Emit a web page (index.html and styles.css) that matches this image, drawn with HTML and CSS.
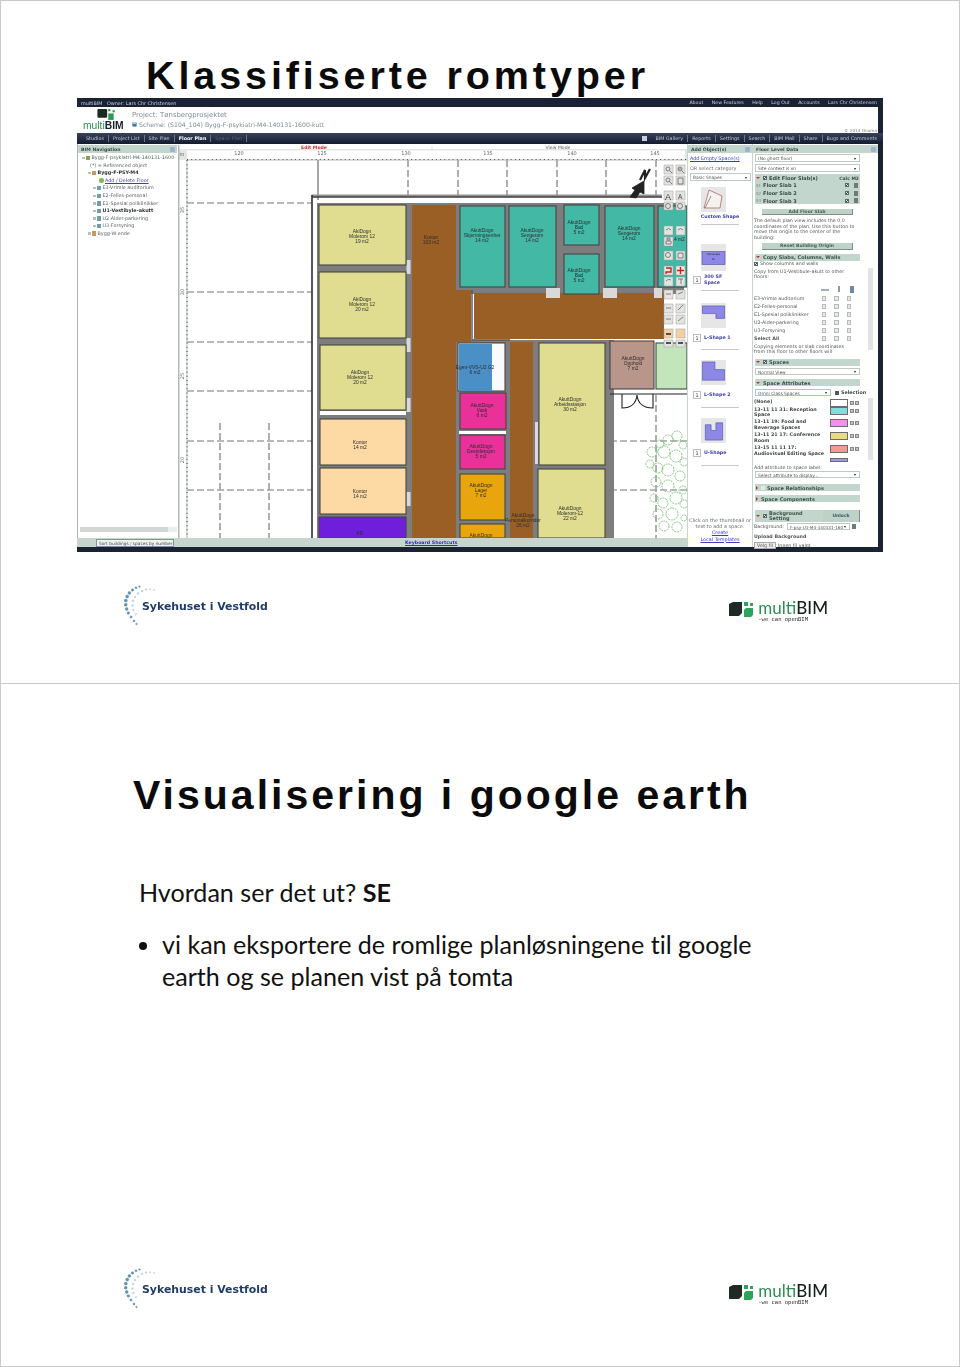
FILE: index.html
```html
<!DOCTYPE html>
<html lang="no">
<head>
<meta charset="utf-8">
<title>Klassifiserte romtyper</title>
<link rel="stylesheet" href="styles.css">
</head>
<body>
<section class="slide">
  <h1 class="title title-one">Klassifiserte romtyper</h1>
  <div class="app">
    <div class="titlebar">
      <span class="owner">multiBIM&nbsp;&nbsp; Owner: Lars Chr Christensen</span>
      <span class="toplinks"><span>About</span><span>New Features</span><span>Help</span><span>Log Out</span><span>Accounts</span><span>Lars Chr Christensen</span></span>
    </div>
    <div class="brand">
      <div class="applogo">
        <svg class="applogo-mark" viewBox="0 0 20 12"><rect x="3" y="1" width="9" height="8" rx="1" fill="#1d2a24"/><rect x="13" y="1" width="2" height="2" fill="#2c8f50"/><rect x="17" y="2" width="2" height="2" fill="#2c8f50"/><rect x="13" y="5" width="5" height="6" fill="#2c9b55"/></svg>
        <div class="applogo-word"><span class="green">multi</span><b>BIM</b></div>
      </div>
      <div class="project">
        <div class="project-name">Project: Tønsbergprosjektet</div>
        <div class="scheme"><svg class="scheme-ico" viewBox="0 0 6 6"><rect x="0.5" y="0.5" width="5" height="5" fill="#3a6fb0"/><rect x="1.5" y="0.5" width="3" height="2" fill="#cfe0f2"/></svg>Scheme: (S104_104) Bygg-F-psykiatri-M4-140131-1600-kutt</div>
      </div>
      <div class="copyright">© 2014 Onuma</div>
    </div>
    <div class="nav">
      <span class="navitem">Studios</span><span class="navitem">Project List</span><span class="navitem">Site Plan</span><span class="navitem on">Floor Plan</span><span class="navitem off">Space Plan</span>
      <span class="navright"><span class="navbox"></span><span class="navitem">BIM Gallery</span><span class="navitem">Reports</span><span class="navitem">Settings</span><span class="navitem">Search</span><span class="navitem">BIM Mail</span><span class="navitem">Share</span><span class="navitem">Bugs and Comments</span></span>
    </div>
    <div class="main">
      <div class="centre">
        <div class="work">
          <aside class="tree">
            <div class="phead"><b>BIM Navigation</b><i class="collapse"></i></div>
            <ul class="treelist">
              <li class="lv0"><i class="tk"></i><i class="ic bld"></i>Bygg-F-psykiatri-M4-140131-1600-</li>
              <li class="lv1">(*) = Referenced object</li>
              <li class="lv2"><i class="tk"></i><i class="ic org"></i><b>Bygg-F-PSY-M4</b></li>
              <li class="lv3"><i class="ic add"></i><span class="link">Add / Delete Floor</span></li>
              <li class="lv3b"><i class="tk"></i><i class="ic flr"></i>E3-Vrimle auditorium</li>
              <li class="lv3b"><i class="tk"></i><i class="ic flr"></i>E2-Felles-personal</li>
              <li class="lv3b"><i class="tk"></i><i class="ic flr"></i>E1-Spesial poliklinikker</li>
              <li class="lv3b"><i class="tk"></i><i class="ic flr"></i><b>U1-Vestibyle-akutt</b></li>
              <li class="lv3b"><i class="tk"></i><i class="ic flr"></i>U2-Alder-parkering</li>
              <li class="lv3b"><i class="tk"></i><i class="ic flr"></i>U3-Forsyning</li>
              <li class="lv2"><i class="tk"></i><i class="ic org"></i>Bygg-W-ende</li>
            </ul>
            <div class="hscroll"><span></span></div>
          </aside>
          <div class="plan">
            <svg class="plan-svg" viewBox="178 145 509 393">
              <rect x="178" y="145" width="509" height="393" fill="#fff"/>
              <rect x="178" y="149" width="509" height="11" fill="#e4e6e4"/>
              <rect x="187" y="150.500" width="498" height="9.500" fill="#fff"/>
              <rect x="178" y="145" width="1.500" height="393" fill="#a9bdb5"/>
              <path class="sep" d="M432 146V150"/>
              <text class="mode red" x="314" y="148.500">Edit Mode</text>
              <text class="mode" x="558" y="148.500">View Mode</text>
              <path class="rulerline" d="M187 160H687M187 160V538"/>
              <path class="rulerticks" d="M187 159.500H687"/>
              <path class="rulerticks-v" d="M187 160V538"/>
              <text class="rl" x="182" y="155.500" text-anchor="middle">m</text>
              <g class="rl" text-anchor="middle">
                <text x="239" y="155">120</text><text x="322" y="155">125</text><text x="406" y="155">130</text><text x="488" y="155">135</text><text x="572" y="155">140</text><text x="655" y="155">145</text>
                <text transform="translate(184 210) rotate(-90)">35</text><text transform="translate(184 292) rotate(-90)">30</text><text transform="translate(184 376) rotate(-90)">25</text><text transform="translate(184 460) rotate(-90)">20</text>
              </g>
              <g class="grid">
                <path d="M187 203H312M187 292H312M187 342H312M187 391H312M187 441H312M187 490H312"/>
                <path d="M220 423V538M269 423V538"/>
                <path d="M408 160V195M458 160V195M507 160V195M557 160V195M606 160V195M656 160V195"/>
                <path d="M610 441H687M610 490H687M656 395V538"/>
              </g>
              <path class="solidgrid" d="M318 160V200"/>
              <g class="tree-art">
                <circle cx="677" cy="436" r="5"/><circle cx="668" cy="440" r="5"/><circle cx="660" cy="444" r="4"/><circle cx="683" cy="445" r="4"/><circle cx="652" cy="452" r="5"/><circle cx="664" cy="452" r="6"/><circle cx="676" cy="456" r="6"/><circle cx="684" cy="462" r="4"/><circle cx="650" cy="464" r="4"/><circle cx="658" cy="468" r="5"/><circle cx="668" cy="470" r="6"/><circle cx="680" cy="476" r="5"/><circle cx="656" cy="482" r="5"/><circle cx="668" cy="486" r="6"/><circle cx="683" cy="490" r="4"/><circle cx="654" cy="498" r="4"/><circle cx="676" cy="498" r="6"/><circle cx="663" cy="503" r="5"/><circle cx="684" cy="504" r="4"/><circle cx="658" cy="514" r="5"/><circle cx="672" cy="514" r="6"/><circle cx="684" cy="518" r="3"/><circle cx="664" cy="526" r="5"/><circle cx="677" cy="527" r="5"/>
              </g>

              <path class="topband" d="M312 195.500H662"/>
              <path class="outer" d="M312 197H662M312 195V538"/>
              <rect class="wallg" x="317" y="203" width="139" height="335"/>
              <rect class="wallg" x="456" y="203" width="228" height="91"/>
              <rect class="wallg" x="456" y="340" width="158" height="198"/>
              <rect class="wallw" x="406.500" y="260" width="4" height="14"/>
              <rect class="wallw" x="406.500" y="338" width="4" height="14"/>
              <rect class="wallw" x="406.500" y="398" width="4" height="14"/>
              <rect class="wallw" x="406.500" y="492" width="4" height="14"/>
              <rect class="wallw" x="535" y="422" width="3" height="42"/>

              <rect class="room brown" x="412" y="205" width="44" height="333"/>
              <rect class="room brown" x="412" y="290" width="59" height="52"/>
              <rect class="room brown" x="474" y="293" width="190" height="46"/>
              <rect class="room brown" x="510" y="342" width="23" height="196"/>
              <path class="thinwall" d="M472 290V340H510"/>

              <rect class="room yellow" x="319" y="205" width="87" height="60"/>
              <rect class="room yellow" x="319" y="272" width="87" height="66"/>
              <rect class="room yellow" x="320" y="345" width="86" height="65"/>
              <rect class="plainwhite" x="320" y="411" width="86" height="4"/>
              <rect class="room peach" x="320" y="419" width="86" height="46"/>
              <rect class="room peach" x="320" y="468" width="86" height="46"/>
              <rect class="room violet" x="319" y="517" width="87" height="21"/>

              <rect class="room teal" x="460" y="206" width="45" height="81"/>
              <rect class="room teal" x="509" y="206" width="47" height="81"/>
              <rect class="room teal" x="564" y="205" width="35" height="40"/>
              <rect class="room teal" x="564" y="254" width="35" height="40"/>
              <rect class="room teal" x="605" y="206" width="49" height="81"/>
              <rect class="room teal" x="658" y="206" width="29" height="81"/>
              <rect class="wallw" x="546" y="288" width="14" height="10"/>
              <rect class="wallw" x="603" y="288" width="14" height="10"/>
              <rect class="wallw" x="654" y="288" width="8" height="10"/>

              <rect class="room white" x="458" y="343" width="47" height="48"/>
              <rect class="room-f blue" x="459" y="344" width="33" height="47"/>
              <rect class="room magenta" x="460" y="393" width="46" height="36"/>
              <rect class="plainwhite" x="459" y="431" width="47" height="3"/>
              <rect class="room magenta" x="460" y="435" width="45" height="34"/>
              <rect class="room amber" x="460" y="474" width="45" height="46"/>
              <rect class="room amber" x="460" y="524" width="45" height="14"/>
              <rect class="room yellow" x="539" y="343" width="66" height="122"/>
              <rect class="room yellow" x="538" y="469" width="67" height="69"/>
              <rect class="room rose" x="610" y="341" width="44" height="48"/>
              <rect class="room mint" x="656" y="343" width="31" height="46"/>

              <g class="door">
                <path d="M610 394H687M622 394V408C630 408 636 405 637 395C638 405 644 408 653 408V394"/>
              </g>

              <g class="rt">
                <text y="233"><tspan x="362">AkiDogn</tspan><tspan x="362" dy="5.200">Molerom 12</tspan><tspan x="362" dy="5.200">19 m2</tspan></text>
                <text y="301"><tspan x="362">AkiDogn</tspan><tspan x="362" dy="5.200">Molerom 12</tspan><tspan x="362" dy="5.200">20 m2</tspan></text>
                <text y="374"><tspan x="360">AkiDogn</tspan><tspan x="360" dy="5.200">Molerom 12</tspan><tspan x="360" dy="5.200">20 m2</tspan></text>
                <text y="444"><tspan x="360">Kontor</tspan><tspan x="360" dy="5.200">14 m2</tspan></text>
                <text y="493"><tspan x="360">Kontor</tspan><tspan x="360" dy="5.200">14 m2</tspan></text>
                <text x="360" y="535">KR</text>
                <text y="239"><tspan x="431">Kontor</tspan><tspan x="431" dy="5.200">103 m2</tspan></text>
                <text y="232"><tspan x="482">AkuttDogn</tspan><tspan x="482" dy="5.200">Skjermingsenhet</tspan><tspan x="482" dy="5.200">14 m2</tspan></text>
                <text y="232"><tspan x="532">AkuttDogn</tspan><tspan x="532" dy="5.200">Sengerom</tspan><tspan x="532" dy="5.200">14 m2</tspan></text>
                <text y="224"><tspan x="579">AkuttDogn</tspan><tspan x="579" dy="5.200">Bad</tspan><tspan x="579" dy="5.200">5 m2</tspan></text>
                <text y="272"><tspan x="579">AkuttDogn</tspan><tspan x="579" dy="5.200">Bad</tspan><tspan x="579" dy="5.200">5 m2</tspan></text>
                <text y="230"><tspan x="629">AkuttDogn</tspan><tspan x="629" dy="5.200">Sengerom</tspan><tspan x="629" dy="5.200">14 m2</tspan></text>
                <text x="678" y="241">14 m2</text>
                <text y="369"><tspan x="475">Egen-VVS-U2 G2</tspan><tspan x="475" dy="5.200">6 m2</tspan></text>
                <text y="407"><tspan x="482">AkuttDogn</tspan><tspan x="482" dy="5.200">Vask</tspan><tspan x="482" dy="5.200">6 m2</tspan></text>
                <text y="448"><tspan x="481">AkuttDogn</tspan><tspan x="481" dy="5.200">Desinfeksjon</tspan><tspan x="481" dy="5.200">5 m2</tspan></text>
                <text y="487"><tspan x="481">AkuttDogn</tspan><tspan x="481" dy="5.200">Lager</tspan><tspan x="481" dy="5.200">7 m2</tspan></text>
                <text x="481" y="537">AkuttDogn</text>
                <text y="517"><tspan x="523">AkuttDogn</tspan><tspan x="523" dy="5.200">Personalkorridor</tspan><tspan x="523" dy="5.200">26 m2</tspan></text>
                <text y="401"><tspan x="570">AkuttDogn</tspan><tspan x="570" dy="5.200">Arbeidsstasjon</tspan><tspan x="570" dy="5.200">30 m2</tspan></text>
                <text y="510"><tspan x="570">AkuttDogn</tspan><tspan x="570" dy="5.200">Molerom-12</tspan><tspan x="570" dy="5.200">22 m2</tspan></text>
                <text y="360"><tspan x="633">AkuttDogn</tspan><tspan x="633" dy="5.200">Opphold</tspan><tspan x="633" dy="5.200">7 m2</tspan></text>
              </g>

              <path class="north" d="M630 197L635 190L632 188L644 181L644 194L640 192L636 198Z"/>
              <path class="north-n" d="M640 180L645 170L645 178L650 169"/>

              <g class="tools">
                <rect x="664" y="165" width="9" height="9"/><rect x="676" y="165" width="9" height="9"/>
                <rect x="664" y="176" width="9" height="9"/><rect x="676" y="176" width="9" height="9"/>
                <rect x="664" y="191" width="9" height="9"/><rect x="676" y="191" width="9" height="9"/>
                <rect x="664" y="202" width="9" height="8"/><rect x="676" y="202" width="9" height="8"/>
                <rect x="664" y="226" width="9" height="9"/><rect x="676" y="226" width="9" height="9"/>
                <rect x="664" y="237" width="9" height="9"/>
                <rect x="664" y="251" width="9" height="9"/><rect x="676" y="251" width="9" height="9"/>
                <rect class="redt" x="664" y="266" width="9" height="9"/><rect class="redt" x="676" y="266" width="9" height="9"/>
                <rect x="664" y="277" width="9" height="9"/><rect x="676" y="277" width="9" height="9"/>
                <rect x="664" y="290" width="9" height="9"/><rect x="676" y="290" width="9" height="9"/>
                <rect x="664" y="304" width="9" height="9"/><rect x="676" y="304" width="9" height="9"/>
                <rect x="664" y="315" width="9" height="9"/><rect x="676" y="315" width="9" height="9"/>
                <rect class="peacht" x="664" y="329" width="9" height="9"/><rect class="peacht" x="676" y="329" width="9" height="9"/>
                <rect x="664" y="340" width="9" height="7"/><rect x="676" y="340" width="9" height="7"/>
              </g>
              <g class="toolg">
                <circle cx="668" cy="169" r="2"/><path d="M669.500 170.500l2.500 2.500"/><circle cx="680" cy="169" r="2"/><path d="M681.500 170.500l2.500 2.500M678.500 169h3"/>
                <circle cx="668" cy="180" r="2"/><path d="M669.500 181.500l2.500 2.500"/><path d="M678 184h5V178h-5z"/>
                <circle cx="668" cy="206" r="2.500"/><circle cx="680" cy="206" r="2.500"/>
                <path d="M666 230q2.500 -3 5 0M678 230q2.500 -3 5 0M666 241h5v3h-5zM667 238h3v2h-3z"/>
                <circle cx="668" cy="255" r="2.500"/><path d="M678 258h5v-5h-5z"/>
                <path d="M666 281q2 -3 5 -1M678 279h5M681 279v5"/>
                <path d="M666 294h5M678 294l5 -2M666 308h5M678 310l5 -5M666 319h5M678 321l5 -4"/>
                <path class="darkg" d="M666 334h5M666 343h5M678 343h5"/>
                <path class="redg" d="M666 268h5v4h-5v2M680.500 267v7M677 270.500h7"/>
              </g>
              <text class="tooltext" x="665" y="199.500">A</text><text class="tooltextsm" x="678" y="199">A</text>
            </svg>
          </div>
        </div>
        <div class="foot">
          <span class="sort">Sort buildings / spaces by number</span>
          <span class="kbd">Keyboard Shortcuts</span>
        </div>
      </div>
      <aside class="objs">
        <div class="phead"><b>Add Object(s)</b><i class="collapse"></i></div>
        <div class="linkrow"><span class="link">Add Empty Space(s)</span></div>
        <div class="orrow">OR select category</div>
        <div class="sel sel-obj">Basic Shapes</div>
        <div class="thumb thumb-custom">
          <svg viewBox="0 0 25 25"><path d="M8 3L21 9L19 21L3 21Z" fill="#f4f1ee" stroke="#a85a50" stroke-width=".7"/><path d="M4 21L10 9" stroke="#333" stroke-width=".5"/></svg>
        </div>
        <div class="shape-name center">Custom Shape</div>
        <div class="divide"></div>
        <div class="thumb thumb-a">
          <svg viewBox="0 0 25 26"><rect x="1" y="7" width="23" height="13" fill="#8d88e6" stroke="#4a4ab0" stroke-width=".6"/><text x="12.500" y="10" class="mini">Rectangle</text><text x="12.500" y="15" class="mini">SF</text></svg>
        </div>
        <div class="shape-row sr-a"><span class="qty">1</span><span class="shape-name">300 SF<br>Space</span></div>
        <div class="divide dv-a"></div>
        <div class="thumb thumb-b">
          <svg viewBox="0 0 25 26"><path d="M1 3H24V16H15V11H1Z" fill="#8d88e6" stroke="#4a4ab0" stroke-width=".6"/></svg>
        </div>
        <div class="shape-row sr-b"><span class="qty">1</span><span class="shape-name">L-Shape 1</span></div>
        <div class="divide dv-b"></div>
        <div class="thumb thumb-c">
          <svg viewBox="0 0 25 26"><path d="M1 2H14V10H24V21H1Z" fill="#8d88e6" stroke="#4a4ab0" stroke-width=".6"/></svg>
        </div>
        <div class="shape-row sr-c"><span class="qty">1</span><span class="shape-name">L-Shape 2</span></div>
        <div class="divide dv-c"></div>
        <div class="thumb thumb-d">
          <svg viewBox="0 0 25 26"><path d="M4 7H10V13H15V5H22V23H4Z" fill="#8d88e6" stroke="#4a4ab0" stroke-width=".6"/></svg>
        </div>
        <div class="shape-row sr-d"><span class="qty">1</span><span class="shape-name">U-Shape</span></div>
        <div class="divide dv-d"></div>
        <div class="hint">Click on the thumbnail or<br>text to add a space.<br><span class="link lk-hint">Create<br>Local Templates</span></div>
      </aside>
      <aside class="floor">
        <div class="phead"><b>Floor Level Data</b><i class="collapse"></i></div>
        <div class="sel s1">(No ghost floor)</div>
        <div class="sel s2">Site context is on</div>
        <div class="slabs">
          <div class="slab-head"><i class="tri"></i><i class="chk"></i><b>Edit Floor Slab(s)</b><b class="calc">Calc M2</b></div>
          <div class="slab"><span class="sn">S1</span><b>Floor Slab 1</b><i class="chk end"></i><i class="bin"></i></div>
          <div class="slab"><span class="sn">S2</span><b>Floor Slab 2</b><i class="chk end"></i><i class="bin"></i></div>
          <div class="slab"><span class="sn">S3</span><b>Floor Slab 3</b><i class="chk end"></i><i class="bin"></i></div>
        </div>
        <div class="btn b1">Add Floor Slab</div>
        <p class="para p1">The default plan view includes the 0,0<br>coordinates of the plan. Use this button to<br>move this origin to the center of the<br>building:</p>
        <div class="btn b2">Reset Building Origin</div>
        <div class="bar b-copy"><i class="tri"></i><b>Copy Slabs, Columns, Walls</b></div>
        <div class="line l-show"><i class="chk"></i>Show columns and walls</div>
        <p class="para p2">Copy from U1-Vestibule-akutt to other<br>floors:</p>
        <div class="copyicons"><svg viewBox="0 0 36 9"><path d="M0 5H8" stroke="#5a7a9a" stroke-width="1.200"/><path d="M18 1V7" stroke="#333" stroke-width="1"/><rect x="29" y="1" width="4" height="7" fill="#6a8aa8"/></svg></div>
        <div class="copylist">
          <div class="cl">E3-Vrimle auditorium<i class="cb"></i><i class="cb"></i><i class="cb"></i></div>
          <div class="cl">E2-Felles-personal<i class="cb"></i><i class="cb"></i><i class="cb"></i></div>
          <div class="cl">E1-Spesial poliklinikker<i class="cb"></i><i class="cb"></i><i class="cb"></i></div>
          <div class="cl">U2-Alder-parkering<i class="cb"></i><i class="cb"></i><i class="cb"></i></div>
          <div class="cl">U3-Forsyning<i class="cb"></i><i class="cb"></i><i class="cb"></i></div>
          <div class="cl"><b>Select All</b><i class="cb"></i><i class="cb"></i><i class="cb"></i></div>
        </div>
        <p class="para p3">Copying elements or slab coordinates<br>from this floor to other floors will</p>
        <div class="bar b-spaces"><i class="tri"></i><i class="chk"></i><b>Spaces</b></div>
        <div class="sel s3">Normal View</div>
        <div class="bar b-attr"><i class="tri"></i><b>Space Attributes</b></div>
        <div class="selrow"><div class="sel s4">Omni Class Spaces</div><i class="pop"></i><b>Selection</b></div>
        <div class="legend">
          <div class="lg lg1"><b>(None)</b><i class="sw w0"></i><i class="mb"></i><i class="mb"></i></div>
          <div class="lg lg2"><b>13-11 11 31: Reception<br>Space</b><i class="sw w1"></i><i class="mb"></i><i class="mb"></i></div>
          <div class="lg lg2"><b>13-11 19: Food and<br>Beverage Spaces</b><i class="sw w2"></i><i class="mb"></i><i class="mb"></i></div>
          <div class="lg lg2"><b>13-11 21 17: Conference<br>Room</b><i class="sw w3"></i><i class="mb"></i><i class="mb"></i></div>
          <div class="lg lg2"><b>13-15 11 11 17:<br>Audiovisual Editing Space</b><i class="sw w4"></i><i class="mb"></i><i class="mb"></i></div>
          <div class="lg lg3"><i class="sw w5"></i></div>
        </div>
        <div class="line l-add">Add attribute to space label:</div>
        <div class="sel s5">Select attribute to display...</div>
        <div class="bar b-rel"><i class="tri red"></i><i class="cbw"></i><b>Space Relationships</b></div>
        <div class="bar b-comp"><i class="tri red"></i><b>Space Components</b></div>
        <div class="bgrow"><div class="bgbar"><i class="tri"></i><i class="chk"></i><b>Background<br>Setting</b></div><div class="unlock">Unlock</div></div>
        <div class="bgsel">Background:<span class="sel s6">F-psy-U1-M4-140131-160</span><i class="bin"></i></div>
        <div class="line l-up"><b>Upload Background</b></div>
        <div class="line l-file"><span class="filebtn">Velg fil</span>Ingen fil valgt</div>
        <div class="vscroll v1"></div>
        <div class="vscroll v2"></div>
      </aside>
    </div>
    <div class="base"></div>
  </div>
  <footer class="logos">
    <div class="shv">
      <svg class="shv-mark" viewBox="0 0 34 45">
        <g class="dots-a">
          <circle cx="15.500" cy="1.500" r=".8"/><circle cx="12" cy="2.800" r="1"/><circle cx="8.500" cy="5" r="1.200"/><circle cx="5.400" cy="8" r="1.400"/><circle cx="3.200" cy="11.500" r="1.500"/><circle cx="1.800" cy="15.500" r="1.500"/><circle cx="1.700" cy="19.700" r="1.500"/><circle cx="2.700" cy="24" r="1.400"/><circle cx="4.300" cy="28" r="1.300"/><circle cx="7" cy="32" r="1.100"/><circle cx="10" cy="36" r="1"/><circle cx="12.500" cy="39" r=".8"/>
        </g>
        <g class="dots-b">
          <circle cx="30" cy="5" r=".7"/><circle cx="26" cy="4.300" r=".8"/><circle cx="22" cy="4.500" r=".9"/><circle cx="18" cy="6" r="1"/><circle cx="14" cy="8.500" r="1"/><circle cx="11" cy="12" r="1"/><circle cx="9" cy="16" r="1"/><circle cx="8.500" cy="20.500" r="1"/><circle cx="9.500" cy="25" r=".9"/><circle cx="12" cy="29" r=".8"/>
        </g>
      </svg>
      <span class="shv-text">Sykehuset i Vestfold</span>
    </div>
    <div class="mbim">
      <svg class="mbim-mark" viewBox="0 0 26 16"><path d="M0 3L4 1H13V12L10 15H0Z" fill="#1f2a24"/><rect x="15" y="1" width="4" height="4" fill="#2ea35c"/><rect x="21" y="2" width="3" height="3" fill="#2ea35c"/><path d="M15 9L17 7H24V14L22 16H15Z" fill="#2ea35c"/></svg>
      <div class="mbim-text"><div class="mbim-word"><span class="green">multi</span><b>BIM</b></div><div class="mbim-sub">-we can openBIM</div></div>
    </div>
  </footer>
</section>
<section class="slide">
  <h1 class="title title-two">Visualisering i google earth</h1>
  <div class="body">
    <p class="lead">Hvordan ser det ut? <b>SE</b></p>
    <ul class="bullets">
      <li>vi kan eksportere de romlige planløsningene til google earth og se planen vist på tomta</li>
    </ul>
  </div>
  <footer class="logos">
    <div class="shv">
      <svg class="shv-mark" viewBox="0 0 34 45">
        <g class="dots-a">
          <circle cx="15.500" cy="1.500" r=".8"/><circle cx="12" cy="2.800" r="1"/><circle cx="8.500" cy="5" r="1.200"/><circle cx="5.400" cy="8" r="1.400"/><circle cx="3.200" cy="11.500" r="1.500"/><circle cx="1.800" cy="15.500" r="1.500"/><circle cx="1.700" cy="19.700" r="1.500"/><circle cx="2.700" cy="24" r="1.400"/><circle cx="4.300" cy="28" r="1.300"/><circle cx="7" cy="32" r="1.100"/><circle cx="10" cy="36" r="1"/><circle cx="12.500" cy="39" r=".8"/>
        </g>
        <g class="dots-b">
          <circle cx="30" cy="5" r=".7"/><circle cx="26" cy="4.300" r=".8"/><circle cx="22" cy="4.500" r=".9"/><circle cx="18" cy="6" r="1"/><circle cx="14" cy="8.500" r="1"/><circle cx="11" cy="12" r="1"/><circle cx="9" cy="16" r="1"/><circle cx="8.500" cy="20.500" r="1"/><circle cx="9.500" cy="25" r=".9"/><circle cx="12" cy="29" r=".8"/>
        </g>
      </svg>
      <span class="shv-text">Sykehuset i Vestfold</span>
    </div>
    <div class="mbim">
      <svg class="mbim-mark" viewBox="0 0 26 16"><path d="M0 3L4 1H13V12L10 15H0Z" fill="#1f2a24"/><rect x="15" y="1" width="4" height="4" fill="#2ea35c"/><rect x="21" y="2" width="3" height="3" fill="#2ea35c"/><path d="M15 9L17 7H24V14L22 16H15Z" fill="#2ea35c"/></svg>
      <div class="mbim-text"><div class="mbim-word"><span class="green">multi</span><b>BIM</b></div><div class="mbim-sub">-we can openBIM</div></div>
    </div>
  </footer>
</section>
</body>
</html>
```
FILE: styles.css
```css
* { box-sizing: border-box; }
html, body { margin: 0; padding: 0; background: #fff; }
body { width: 960px; height: 1367px; overflow: hidden; font-family: "Liberation Sans", Arial, sans-serif; color: #000; }
.slide { height: 683px; border: 1px solid #c9c9c9; border-bottom-width: 0; display: flex; flex-direction: column; overflow: hidden; }
.slide + .slide { height: 684px; border-bottom-width: 1px; }
.title { margin: 0; font-family: "Liberation Sans", Arial, sans-serif; font-weight: 700; white-space: nowrap; color: #0b0b0b; }
.title-one { font-size: 39.500px; letter-spacing: 3.900px; line-height: 46px; padding: 51px 0 0 145px; height: 97px; flex: none; }
.title-two { font-size: 41px; letter-spacing: 3px; line-height: 46px; padding: 88px 0 0 132px; height: 134px; flex: none; }

.app { margin-left: 76px; width: 806px; height: 454px; display: flex; flex-direction: column; background: #c6d6cf; font-family: "DejaVu Sans", Verdana, sans-serif; font-size: 4.600px; color: #4a4f4e; filter: blur(.35px); flex: none; }
.app i { display: inline-block; font-style: normal; }
.green { color: #2c8f50; }
.titlebar { height: 9px; background: #1a2233; color: #cdd3dc; display: flex; justify-content: space-between; align-items: center; padding: 0 6px 0 4px; font-size: 4.850px; }
.toplinks { display: flex; gap: 8.500px; font-size: 4.700px; }
.brand { height: 26px; background: #fff; border-right: 5px solid #1a2233; display: flex; position: relative; flex: none; }
.applogo { width: 55px; padding: 1px 0 0 6px; flex: none; }
.applogo-mark { display: block; width: 24px; height: 13px; margin-left: 10px; }
.applogo-word { font-family: "Liberation Sans", sans-serif; font-size: 10.300px; line-height: 9px; color: #17212b; }
.project { padding-top: 4px; color: #7d8b95; }
.project-name { font-size: 6.900px; line-height: 9px; }
.scheme { font-size: 6.150px; line-height: 9px; display: flex; align-items: center; gap: 2px; white-space: nowrap; }
.scheme-ico { width: 5px; height: 5px; flex: none; }
.copyright { position: absolute; right: 1px; bottom: 0; font-size: 4.200px; color: #7a7f80; }
.nav { height: 11px; background: linear-gradient(#37425d, #141b2f); color: #c2c9d2; display: flex; align-items: center; padding-left: 5px; font-size: 4.850px; flex: none; }
.navitem { padding: 0 4px; border-right: 1px solid #6c7486; line-height: 7px; white-space: nowrap; }
.navitem.on { color: #fff; font-weight: 700; }
.navitem.off { color: #5a6273; }
.navright { margin-left: auto; display: flex; align-items: center; padding-right: 2px; }
.navright .navitem:last-child { border-right: 0; }
.navbox { width: 5px; height: 5px; background: #c8ced6; margin-right: 4px; }
.main { height: 403px; display: flex; background: #fff; border-right: 5px solid #1a2233; flex: none; }
.centre { width: 610px; flex: none; display: flex; flex-direction: column; }
.work { height: 394px; display: flex; flex: none; }
.phead { height: 8px; margin-top: 1px; background: #c3d6cd; display: flex; justify-content: space-between; align-items: center; padding: 0 2px 0 3px; color: #3c4a44; font-size: 4.600px; }
.collapse { width: 5px; height: 5px; border-radius: 1px; background: #9fb4cc; }
.tree { width: 101px; padding-right: 1px; border-left: 1px solid #aeb4b2; position: relative; flex: none; }
.treelist { margin: 1px 0 0; padding: 0; list-style: none; }
.treelist li { height: 7.600px; line-height: 7.600px; white-space: nowrap; font-size: 4.850px; display: flex; align-items: center; color: #5a5f5e; }
.treelist b { color: #2c3230; }
.lv0 { padding-left: 4px; }
.lv1 { padding-left: 12px; }
.lv2 { padding-left: 10px; }
.lv3 { padding-left: 21px; }
.lv3b { padding-left: 15px; }
.tk { width: 2.500px; height: 2.500px; background: #b9bfbd; margin-right: 1px; flex: none; }
.ic { width: 4.500px; height: 4.500px; margin-right: 1.500px; flex: none; }
.bld { background: #8b9f5b; }
.org { background: #c59b5a; }
.flr { background: #6f9fa5; }
.add { background: #7cb85a; border-radius: 50%; }
.link { color: #3a3ec0; text-decoration: underline; }
.hscroll { position: absolute; left: 2px; right: 1px; bottom: 6px; height: 5px; background: #eceeed; }
.hscroll span { display: block; width: 88px; height: 5px; background: #d2d6d4; }
.plan { width: 509px; height: 394px; padding-top: 1px; flex: none; }
.plan-svg { display: block; width: 509px; height: 393px; }
.sep { stroke: #c8c8c8; stroke-width: .5; }
.mode { font-size: 4.600px; text-anchor: middle; fill: #555; font-family: "DejaVu Sans", sans-serif; }
.mode.red { fill: #c8322b; font-weight: 700; }
.rulerline { stroke: #8a8a8a; stroke-width: .6; fill: none; }
.rulerticks { stroke: #555; stroke-width: 1.200; stroke-dasharray: 1 3.150; fill: none; }
.rulerticks-v { stroke: #555; stroke-width: 1.200; stroke-dasharray: 1 3.150; fill: none; }
.rl { font-size: 5px; fill: #666; font-family: "DejaVu Sans", sans-serif; }
.grid path { stroke: #a2a2a2; stroke-width: 1.700; stroke-dasharray: 7 3; fill: none; }
.solidgrid { stroke: #a6a6a6; stroke-width: 2; fill: none; }
.tree-art circle { fill: none; stroke: #79bf73; stroke-width: .9; stroke-dasharray: 2 .8; }
.topband { stroke: #8f8f8f; stroke-width: 2; fill: none; }
.outer { stroke: #3a3a3a; stroke-width: 1.700; fill: none; }
.wallg { fill: #7d7d7d; }
.wallw { fill: #d9d9d9; }
.thinwall { fill: none; stroke: #555; stroke-width: 1.400; }
.room { stroke: #454545; stroke-width: 1.100; }
.room-f { stroke: none; }
.brown { fill: #9a5f25; stroke: none; }
.yellow { fill: #e0dd90; }
.peach { fill: #fdd9a3; }
.violet { fill: #6f1fdc; }
.teal { fill: #42b8a5; }
.blue { fill: #4a8fc6; }
.white { fill: #f8fafc; }
.plainwhite { fill: #fff; }
.magenta { fill: #ea3099; }
.amber { fill: #e8a60c; }
.rose { fill: #b9968a; }
.mint { fill: #c3e5bb; }
.door path { fill: none; stroke: #222; stroke-width: 1.100; }
.rt text { font: 4.900px "Liberation Sans", sans-serif; text-anchor: middle; fill: #2d2d2d; }
.north { fill: #222; stroke: #222; stroke-width: .8; }
.north-n { fill: none; stroke: #222; stroke-width: 2.200; }
.tools rect { fill: #e3e3df; stroke: #9a9a9a; stroke-width: .5; }
.tools rect.redt { fill: #ece7e2; }
.tools rect.peacht { fill: #f4cfa6; }
.toolg circle, .toolg path { fill: none; stroke: #666; stroke-width: .8; }
.toolg path.redg { stroke: #cc2020; stroke-width: 1.400; }
.toolg path.darkg { stroke: #222; stroke-width: 1.600; }
.tooltext { font: 9px "Liberation Sans", sans-serif; fill: #444; }
.tooltextsm { font: 6.500px "Liberation Sans", sans-serif; fill: #444; }

.objs { width: 65px; flex: none; display: flex; flex-direction: column; border-left: 1px solid #c6d6cf; font-size: 4.900px; }
.linkrow { margin-top: 2px; padding-left: 2px; line-height: 7px; height: 7px; white-space: nowrap; }
.orrow { margin-top: 3px; padding-left: 2px; line-height: 7px; height: 7px; color: #6b6f6e; white-space: nowrap; }
.sel { background: #fff; border: .5px solid #c0c8c4; white-space: nowrap; height: 7.500px; line-height: 7px; padding-left: 2px; position: relative; color: #555; font-size: 4.400px; }
.sel::after { content: ""; position: absolute; right: 3px; top: 2.500px; border: 1.500px solid transparent; border-top: 2px solid #222; }
.sel-obj { margin: 1px 1px 0 2px; }
.thumb { width: 25px; height: 25px; background: #e6e6e6; margin-left: 13px; flex: none; }
.thumb svg { display: block; width: 100%; height: 100%; }
.mini { font-size: 2.500px; text-anchor: middle; fill: #222; }
.thumb-custom { margin-top: 6px; }
.center { text-align: center; }
.shape-name { color: #3d3dae; font-weight: 700; line-height: 6.500px; font-size: 4.750px; white-space: nowrap; }
.objs > .shape-name { margin-top: 2px; }
.divide { height: 1px; width: 38px; background: #c6cac8; margin: 4px 0 0 13px; flex: none; }
.thumb-a { margin-top: 19px; height: 27px; }
.shape-row { display: flex; align-items: center; gap: 3px; padding-left: 5px; height: 14px; margin-top: 2px; flex: none; }
.qty { width: 8px; height: 7.500px; border: .5px solid #b9bdbb; text-align: center; line-height: 7px; color: #333; flex: none; }
.dv-a { margin-top: 3px; }
.thumb-b { margin-top: 12px; }
.sr-b, .sr-c, .sr-d { height: 8px; margin-top: 6px; }
.dv-b { margin-top: 7px; }
.thumb-c { margin-top: 10px; }
.dv-c { margin-top: 8px; }
.thumb-d { margin-top: 10px; }
.dv-d { margin-top: 8px; }
.hint { margin-top: 52px; text-align: center; line-height: 5.500px; color: #6a6f6e; font-size: 4.900px; white-space: nowrap; }
.lk-hint { line-height: 6px; }

.floor { width: 126px; flex: none; position: relative; border-left: 1px solid #c6d6cf; padding-left: 1px; padding-right: 18px; font-size: 4.500px; }
.floor .phead { margin-right: -18px; margin-left: -1px; }
.floor .sel { margin-left: 1px; }
.s1 { margin-top: 1px; }
.s2 { margin-top: 2.500px; }
.slabs { margin: 2px 0 0 1px; background: #c3d6cd; height: 30px; padding-top: 1px; }
.slab-head { display: flex; align-items: center; height: 7px; font-size: 5px; color: #38463f; gap: 2px; padding-left: 1px; white-space: nowrap; }
.calc { margin-left: auto; padding-right: 1px; font-size: 4.500px; }
.tri { width: 0; height: 0; border: 2px solid transparent; border-top: 2.500px solid #c42f2f; border-bottom: 0; margin-right: 1px; flex: none; }
.tri.red { border: 2px solid transparent; border-left: 2.500px solid #c42f2f; border-right: 0; }
.chk { width: 4px; height: 4px; background: linear-gradient(135deg, #e9efec 35%, #3d4844 35%, #3d4844 65%, #e9efec 65%); border: .5px solid #5e6a65; flex: none; }
.chk.end { margin-left: auto; margin-right: 3px; }
.slab { display: flex; align-items: center; height: 7.800px; font-size: 5px; color: #38463f; gap: 2px; padding-left: 1px; white-space: nowrap; }
.sn { color: #7c8a84; font-size: 4px; }
.bin { width: 4px; height: 5px; background: #6f7a76; flex: none; margin-right: 2px; }
.btn { background: #bed2c8; border-right: 1px solid #7e8e87; border-bottom: 1px solid #7e8e87; text-align: center; font-weight: 700; color: #465; height: 6.500px; line-height: 6px; margin: 0 7px 0 8px; font-size: 4.500px; }
.b1 { margin-top: 5px; }
.b2 { margin-top: 3px; }
.para { margin: 0; line-height: 5.500px; color: #555; font-size: 4.750px; white-space: nowrap; }
.p1 { margin-top: 3px; }
.bar { display: flex; align-items: center; background: #c3d6cd; height: 7px; color: #3d5148; font-size: 5px; gap: 2px; padding-left: 1px; margin-left: 1px; white-space: nowrap; }
.b-copy { margin-top: 4px; }
.line { line-height: 6px; height: 6px; white-space: nowrap; display: flex; align-items: center; gap: 2px; color: #555; font-size: 4.750px; }
.l-show { margin-top: 0; }
.p2 { margin-top: 2px; }
.copyicons { height: 9px; margin-top: 5px; padding-left: 67px; }
.copyicons svg { display: block; width: 36px; height: 9px; }
.copylist { margin-top: 1px; }
.cl { height: 8px; display: flex; align-items: center; white-space: nowrap; color: #555; font-size: 4.750px; padding-right: 9px; }
.cl .cb:first-of-type { margin-left: auto; }
.cb { width: 4.500px; height: 4.500px; background: #e8ebe9; border: .5px solid #b6bcb9; margin-right: 8px; flex: none; }
.cl .cb:last-child { margin-right: 0; }
.p3 { margin-top: 1px; height: 10px; overflow: hidden; line-height: 5px; }
.b-spaces { margin-top: 5px; }
.s3 { margin-top: 2px; }
.b-attr { margin-top: 4px; }
.selrow { display: flex; align-items: center; gap: 2px; height: 8px; margin-top: 2.500px; margin-right: -14px; font-size: 4.800px; color: #38463f; white-space: nowrap; }
.s4 { width: 76px; flex: none; border-color: #a9c2df; }
.pop { width: 4px; height: 4px; background: #555; margin-left: 2px; flex: none; }
.legend { height: 67px; overflow: hidden; margin-top: 2px; width: 124px; }
.lg { display: flex; align-items: flex-start; font-size: 4.800px; line-height: 5.800px; color: #3f4744; width: 107px; position: relative; }
.lg b { width: 76px; white-space: nowrap; flex: none; }
.lg1 { height: 8px; }
.lg2 { height: 12.900px; }
.lg3 { height: 4px; padding-left: 76px; }
.sw { width: 18px; height: 8px; border: .5px solid #6d6d6d; flex: none; }
.mb { width: 4px; height: 4px; background: #c1c5c3; border: .5px solid #888; margin: 2px 0 0 1.500px; flex: none; }
.w0 { background: #fff; }
.w1 { background: #7fdfdc; }
.w2 { background: #f491ec; }
.w3 { background: #e8dc82; }
.w4 { background: #f39a92; }
.w5 { background: #9b9be2; height: 4px; }
.l-add { margin-top: -1px; }
.s5 { margin-top: 0; }
.b-rel { margin-top: 6px; }
.cbw { width: 4px; height: 4px; background: #e2e8e5; flex: none; }
.b-comp { margin-top: 4px; }
.bgrow { display: flex; margin: 8px 0 0 1px; height: 12px; }
.bgbar { flex: none; width: 68px; background: #c3d6cd; display: flex; align-items: center; gap: 2px; padding-left: 1px; color: #3d5148; font-size: 5px; line-height: 5.500px; white-space: nowrap; }
.unlock { flex: 1; background: #bed2c8; border-right: 1px solid #7e8e87; text-align: center; line-height: 11px; font-size: 4.500px; font-weight: 700; color: #456; }
.bgsel { display: flex; align-items: center; gap: 2px; margin-top: 0; height: 8px; white-space: nowrap; color: #555; font-size: 4.750px; }
.s6 { width: 63px; height: 7px; flex: none; font-size: 4.200px; }
.l-up { margin-top: 4px; }
.l-file { margin-top: 2px; height: 7px; overflow: hidden; }
.filebtn { border: .5px solid #aaa; background: #eee; padding: 0 2px; line-height: 5.500px; }
.vscroll { position: absolute; right: 5px; width: 5px; background: #e1e4e2; }
.v1 { top: 124px; height: 82px; }
.v2 { top: 254px; height: 62px; }
.foot { height: 9px; background: #c6d6cf; display: flex; align-items: center; flex: none; }
.sort { margin-left: 19px; width: 78px; height: 8px; line-height: 7px; background: #eef2f6; border: .5px solid #7c93b4; padding-left: 2px; white-space: nowrap; color: #444; font-size: 4.300px; flex: none; }
.kbd { margin-left: 231px; color: #2b2fc2; text-decoration: underline; font-weight: 700; font-size: 4.700px; white-space: nowrap; }
.base { height: 5px; background: #1a2233; flex: none; }

.logos { margin-top: auto; display: flex; justify-content: space-between; padding: 0 131px 53px 123px; filter: blur(.3px); flex: none; }
.shv { display: flex; align-items: flex-start; width: 146px; height: 45px; }
.shv-mark { width: 34px; height: 45px; flex: none; }
.dots-a { fill: #5f90ae; stroke: #5f90ae; stroke-width: .5; }
.dots-b { fill: #b7cfdc; stroke: #b7cfdc; stroke-width: .3; }
.shv-text { font: 700 10.900px "DejaVu Sans", sans-serif; color: #1f3b68; margin: 15px 0 0 -16px; white-space: nowrap; }
.mbim { display: flex; align-items: flex-start; gap: 3px; height: 28px; margin-top: 14px; }
.mbim-mark { width: 26px; height: 16px; flex: none; margin-top: 2px; }
.mbim-word { font: 17px/17px "Lato", sans-serif; color: #15201c; white-space: nowrap; }
.mbim-word b { font-weight: 500; }
.mbim-sub { font: 5.500px/6px "DejaVu Sans Mono", monospace; color: #2a2a2a; white-space: nowrap; }

.body { font-family: "Lato", "Liberation Sans", sans-serif; font-size: 25.100px; line-height: 32px; color: #111; padding: 0 0 0 138px; margin-top: 0; font-variant-ligatures: none; }
.lead { margin: 58px 0 0; }
.bullets { margin: 20px 0 0; padding: 0 0 0 23px; width: 640px; }
```
